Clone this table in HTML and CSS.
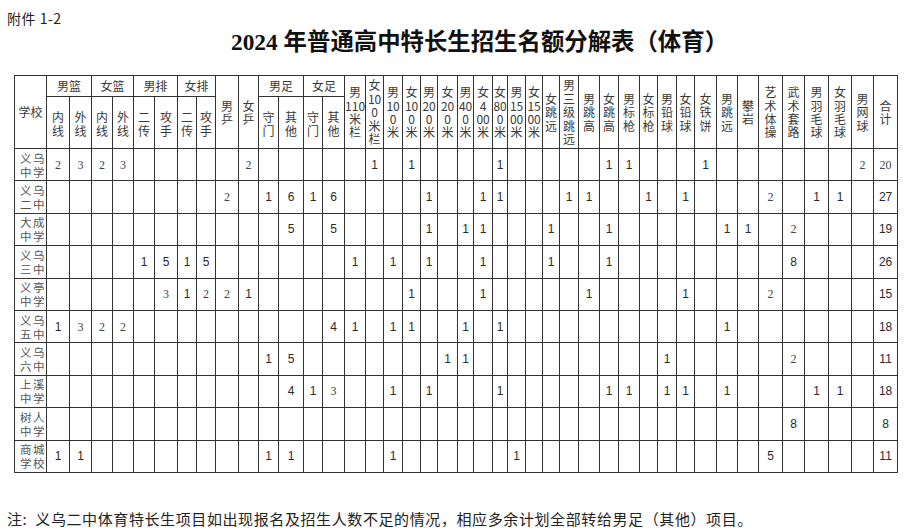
FILE: index.html
```html
<!DOCTYPE html>
<html lang="zh-CN">
<head>
<meta charset="utf-8">
<title>2024年普通高中特长生招生名额分解表（体育）</title>
<link rel="stylesheet" href="styles.css">
</head>
<body>
<div class="page">
  <div class="attach">附件 1-2</div>
  <h1 class="title"><span class="yr">2024</span> 年普通高中特长生招生名额分解表（体育）</h1>
  <table class="quota">
    <colgroup>
      <col><col><col><col><col><col><col><col><col><col><col><col><col><col><col>
      <col><col><col><col><col><col><col><col><col><col><col><col><col><col><col>
      <col><col><col><col><col><col><col><col><col><col><col><col><col>
    </colgroup>
    <thead>
      <tr class="hr1">
        <th rowspan="2">学校</th>
        <th colspan="2">男篮</th>
        <th colspan="2">女篮</th>
        <th colspan="2">男排</th>
        <th colspan="2">女排</th>
        <th rowspan="2">男<br>乒</th>
        <th rowspan="2">女<br>乒</th>
        <th colspan="2">男足</th>
        <th colspan="2">女足</th>
        <th rowspan="2">男<br>110<br>米<br>栏</th>
        <th rowspan="2">女<br>10<br>0<br>米<br>栏</th>
        <th rowspan="2">男<br>10<br>0<br>米</th>
        <th rowspan="2">女<br>10<br>0<br>米</th>
        <th rowspan="2">男<br>20<br>0<br>米</th>
        <th rowspan="2">女<br>20<br>0<br>米</th>
        <th rowspan="2">男<br>40<br>0<br>米</th>
        <th rowspan="2">女<br>4<br>00<br>米</th>
        <th rowspan="2">女<br>80<br>0<br>米</th>
        <th rowspan="2">男<br>15<br>00<br>米</th>
        <th rowspan="2">女<br>15<br>00<br>米</th>
        <th rowspan="2">女<br>跳<br>远</th>
        <th rowspan="2">男<br>三<br>级<br>跳<br>远</th>
        <th rowspan="2">男<br>跳<br>高</th>
        <th rowspan="2">女<br>跳<br>高</th>
        <th rowspan="2">男<br>标<br>枪</th>
        <th rowspan="2">女<br>标<br>枪</th>
        <th rowspan="2">男<br>铅<br>球</th>
        <th rowspan="2">女<br>铅<br>球</th>
        <th rowspan="2">女<br>铁<br>饼</th>
        <th rowspan="2">男<br>跳<br>远</th>
        <th rowspan="2">攀<br>岩</th>
        <th rowspan="2">艺<br>术<br>体<br>操</th>
        <th rowspan="2">武<br>术<br>套<br>路</th>
        <th rowspan="2">男<br>羽<br>毛<br>球</th>
        <th rowspan="2">女<br>羽<br>毛<br>球</th>
        <th rowspan="2">男<br>网<br>球</th>
        <th rowspan="2">合<br>计</th>
      </tr>
      <tr class="hr2">
        <th>内<br>线</th><th>外<br>线</th>
        <th>内<br>线</th><th>外<br>线</th>
        <th>二<br>传</th><th>攻<br>手</th>
        <th>二<br>传</th><th>攻<br>手</th>
        <th>守<br>门</th><th>其<br>他</th>
        <th>守<br>门</th><th>其<br>他</th>
      </tr>
    </thead>
    <tbody>
      <tr>
        <td class="sch">义乌<br>中学</td>
        <td class="s">2</td><td class="s">3</td><td class="s">2</td><td class="s">3</td>
        <td></td><td></td><td></td><td></td><td></td><td class="s">2</td>
        <td></td><td></td><td></td><td></td>
        <td></td><td>1</td><td></td><td>1</td><td></td><td></td><td></td><td></td><td>1</td><td></td><td></td>
        <td></td><td></td><td></td><td>1</td><td>1</td><td></td><td></td><td></td><td>1</td><td></td>
        <td></td><td></td><td></td><td></td><td></td><td class="s">2</td><td class="s">20</td>
      </tr>
      <tr>
        <td class="sch">义乌<br>二中</td>
        <td></td><td></td><td></td><td></td>
        <td></td><td></td><td></td><td></td><td class="s">2</td><td></td>
        <td>1</td><td>6</td><td>1</td><td>6</td>
        <td></td><td></td><td></td><td></td><td>1</td><td></td><td></td><td>1</td><td>1</td><td></td><td></td>
        <td></td><td>1</td><td>1</td><td></td><td></td><td>1</td><td></td><td>1</td><td></td><td></td>
        <td></td><td class="s">2</td><td></td><td>1</td><td>1</td><td></td><td>27</td>
      </tr>
      <tr>
        <td class="sch">大成<br>中学</td>
        <td></td><td></td><td></td><td></td>
        <td></td><td></td><td></td><td></td><td></td><td></td>
        <td></td><td>5</td><td></td><td>5</td>
        <td></td><td></td><td></td><td></td><td>1</td><td></td><td>1</td><td>1</td><td></td><td></td><td></td>
        <td>1</td><td></td><td></td><td>1</td><td></td><td></td><td></td><td></td><td></td><td>1</td>
        <td>1</td><td></td><td class="s">2</td><td></td><td></td><td></td><td>19</td>
      </tr>
      <tr>
        <td class="sch">义乌<br>三中</td>
        <td></td><td></td><td></td><td></td>
        <td>1</td><td>5</td><td>1</td><td>5</td><td></td><td></td>
        <td></td><td></td><td></td><td></td>
        <td>1</td><td></td><td>1</td><td></td><td>1</td><td></td><td></td><td>1</td><td></td><td></td><td></td>
        <td>1</td><td></td><td></td><td>1</td><td></td><td></td><td></td><td></td><td></td><td></td>
        <td></td><td></td><td>8</td><td></td><td></td><td></td><td>26</td>
      </tr>
      <tr>
        <td class="sch">义亭<br>中学</td>
        <td></td><td></td><td></td><td></td>
        <td></td><td class="s">3</td><td>1</td><td class="s">2</td><td class="s">2</td><td>1</td>
        <td></td><td></td><td></td><td></td>
        <td></td><td></td><td></td><td>1</td><td></td><td></td><td></td><td>1</td><td></td><td></td><td></td>
        <td></td><td></td><td>1</td><td></td><td></td><td></td><td></td><td>1</td><td></td><td></td>
        <td></td><td class="s">2</td><td></td><td></td><td></td><td></td><td>15</td>
      </tr>
      <tr>
        <td class="sch">义乌<br>五中</td>
        <td>1</td><td class="s">3</td><td class="s">2</td><td class="s">2</td>
        <td></td><td></td><td></td><td></td><td></td><td></td>
        <td></td><td></td><td></td><td>4</td>
        <td>1</td><td></td><td>1</td><td>1</td><td></td><td></td><td>1</td><td></td><td>1</td><td></td><td></td>
        <td></td><td></td><td></td><td></td><td></td><td></td><td></td><td></td><td></td><td>1</td>
        <td></td><td></td><td></td><td></td><td></td><td></td><td>18</td>
      </tr>
      <tr>
        <td class="sch">义乌<br>六中</td>
        <td></td><td></td><td></td><td></td>
        <td></td><td></td><td></td><td></td><td></td><td></td>
        <td>1</td><td>5</td><td></td><td></td>
        <td></td><td></td><td></td><td></td><td></td><td>1</td><td>1</td><td></td><td></td><td></td><td></td>
        <td></td><td></td><td></td><td></td><td></td><td></td><td>1</td><td></td><td></td><td></td>
        <td></td><td></td><td class="s">2</td><td></td><td></td><td></td><td>11</td>
      </tr>
      <tr>
        <td class="sch">上溪<br>中学</td>
        <td></td><td></td><td></td><td></td>
        <td></td><td></td><td></td><td></td><td></td><td></td>
        <td></td><td>4</td><td>1</td><td class="s">3</td>
        <td></td><td></td><td>1</td><td></td><td>1</td><td></td><td></td><td></td><td>1</td><td></td><td></td>
        <td></td><td></td><td></td><td>1</td><td>1</td><td></td><td>1</td><td>1</td><td></td><td>1</td>
        <td></td><td></td><td></td><td>1</td><td>1</td><td></td><td>18</td>
      </tr>
      <tr>
        <td class="sch">树人<br>中学</td>
        <td></td><td></td><td></td><td></td>
        <td></td><td></td><td></td><td></td><td></td><td></td>
        <td></td><td></td><td></td><td></td>
        <td></td><td></td><td></td><td></td><td></td><td></td><td></td><td></td><td></td><td></td><td></td>
        <td></td><td></td><td></td><td></td><td></td><td></td><td></td><td></td><td></td><td></td>
        <td></td><td></td><td>8</td><td></td><td></td><td></td><td>8</td>
      </tr>
      <tr>
        <td class="sch">商城<br>学校</td>
        <td>1</td><td>1</td><td></td><td></td>
        <td></td><td></td><td></td><td></td><td></td><td></td>
        <td>1</td><td>1</td><td></td><td></td>
        <td></td><td></td><td>1</td><td></td><td></td><td></td><td></td><td></td><td></td><td>1</td><td></td>
        <td></td><td></td><td></td><td></td><td></td><td></td><td></td><td></td><td></td><td></td>
        <td></td><td>5</td><td></td><td></td><td></td><td></td><td>11</td>
      </tr>
    </tbody>
  </table>
  <p class="note">注:&nbsp;&nbsp;义乌二中体育特长生项目如出现报名及招生人数不足的情况，相应多余计划全部转给男足（其他）项目。</p>
</div>
</body>
</html>
```
FILE: styles.css
```css
html, body {
  margin: 0;
  padding: 0;
  background: #ffffff;
}

body {
  font-family: "Noto Sans CJK SC", sans-serif;
  color: #2e2e2e;
}

.page {
  width: 915px;
  height: 530px;
  overflow: hidden;
}

.attach {
  font-size: 14px;
  line-height: 14px;
  padding: 11px 0 0 7px;
  color: #222;
  letter-spacing: 0.5px;
}

.title {
  margin: 4px 0 0;
  padding-left: 44px;
  text-align: center;
  font-size: 23.4px;
  line-height: 26px;
  font-weight: 700;
  color: #111;
  font-family: "Liberation Serif", "Noto Sans CJK SC", serif;
}

.title .yr {
  font-family: "Liberation Serif", serif;
  font-weight: 700;
}

.quota {
  margin: 20px 0 0 14px;
  border-collapse: collapse;
  table-layout: fixed;
  width: 883px;
}

.quota th,
.quota td {
  border: 1px solid #333;
  padding: 0;
  text-align: center;
  vertical-align: middle;
  overflow: hidden;
  white-space: nowrap;
}

.quota th {
  font-weight: 400;
  font-size: 12px;
  line-height: 13.4px;
  color: #3a3a3a;
}

.quota .hr1 { height: 21px; }
.quota .hr2 { height: 52px; }
.quota .hr2 th { line-height: 14px; padding-top: 2px; }

.quota tbody tr { height: 32.4px; }

.quota td {
  font-family: "Liberation Sans", sans-serif;
  font-size: 12px;
  line-height: 14px;
  color: #2a2a2a;
}

.quota td.s {
  font-family: "Liberation Serif", serif;
  font-size: 12px;
  color: #444;
}

.quota td.sch {
  font-family: "Noto Sans CJK SC", sans-serif;
  font-size: 11.5px;
  line-height: 14px;
  letter-spacing: 1.5px;
  text-align: left;
  padding-left: 5px;
  color: #555;
}

.quota col:nth-child(1) { width: 32px; }
.quota col:nth-child(2) { width: 23px; }
.quota col:nth-child(3) { width: 22px; }
.quota col:nth-child(4) { width: 21px; }
.quota col:nth-child(5) { width: 21px; }
.quota col:nth-child(6) { width: 21px; }
.quota col:nth-child(7) { width: 23px; }
.quota col:nth-child(8) { width: 19px; }
.quota col:nth-child(9) { width: 19px; }
.quota col:nth-child(10) { width: 23px; }
.quota col:nth-child(11) { width: 20px; }
.quota col:nth-child(12) { width: 20px; }
.quota col:nth-child(13) { width: 25px; }
.quota col:nth-child(14) { width: 19px; }
.quota col:nth-child(15) { width: 22px; }
.quota col:nth-child(16) { width: 21px; }
.quota col:nth-child(17) { width: 18px; }
.quota col:nth-child(18) { width: 19px; }
.quota col:nth-child(19) { width: 18px; }
.quota col:nth-child(20) { width: 17px; }
.quota col:nth-child(21) { width: 20px; }
.quota col:nth-child(22) { width: 16px; }
.quota col:nth-child(23) { width: 19px; }
.quota col:nth-child(24) { width: 15px; }
.quota col:nth-child(25) { width: 18px; }
.quota col:nth-child(26) { width: 17px; }
.quota col:nth-child(27) { width: 17px; }
.quota col:nth-child(28) { width: 19px; }
.quota col:nth-child(29) { width: 21px; }
.quota col:nth-child(30) { width: 19px; }
.quota col:nth-child(31) { width: 21px; }
.quota col:nth-child(32) { width: 18px; }
.quota col:nth-child(33) { width: 19px; }
.quota col:nth-child(34) { width: 18px; }
.quota col:nth-child(35) { width: 22px; }
.quota col:nth-child(36) { width: 21px; }
.quota col:nth-child(37) { width: 21px; }
.quota col:nth-child(38) { width: 24px; }
.quota col:nth-child(39) { width: 22px; }
.quota col:nth-child(40) { width: 24px; }
.quota col:nth-child(41) { width: 23px; }
.quota col:nth-child(42) { width: 22px; }
.quota col:nth-child(43) { width: 24px; }

.note {
  margin: 37px 0 0 7px;
  font-size: 15px;
  line-height: 18px;
  letter-spacing: 0.6px;
  color: #222;
  white-space: nowrap;
}
```
